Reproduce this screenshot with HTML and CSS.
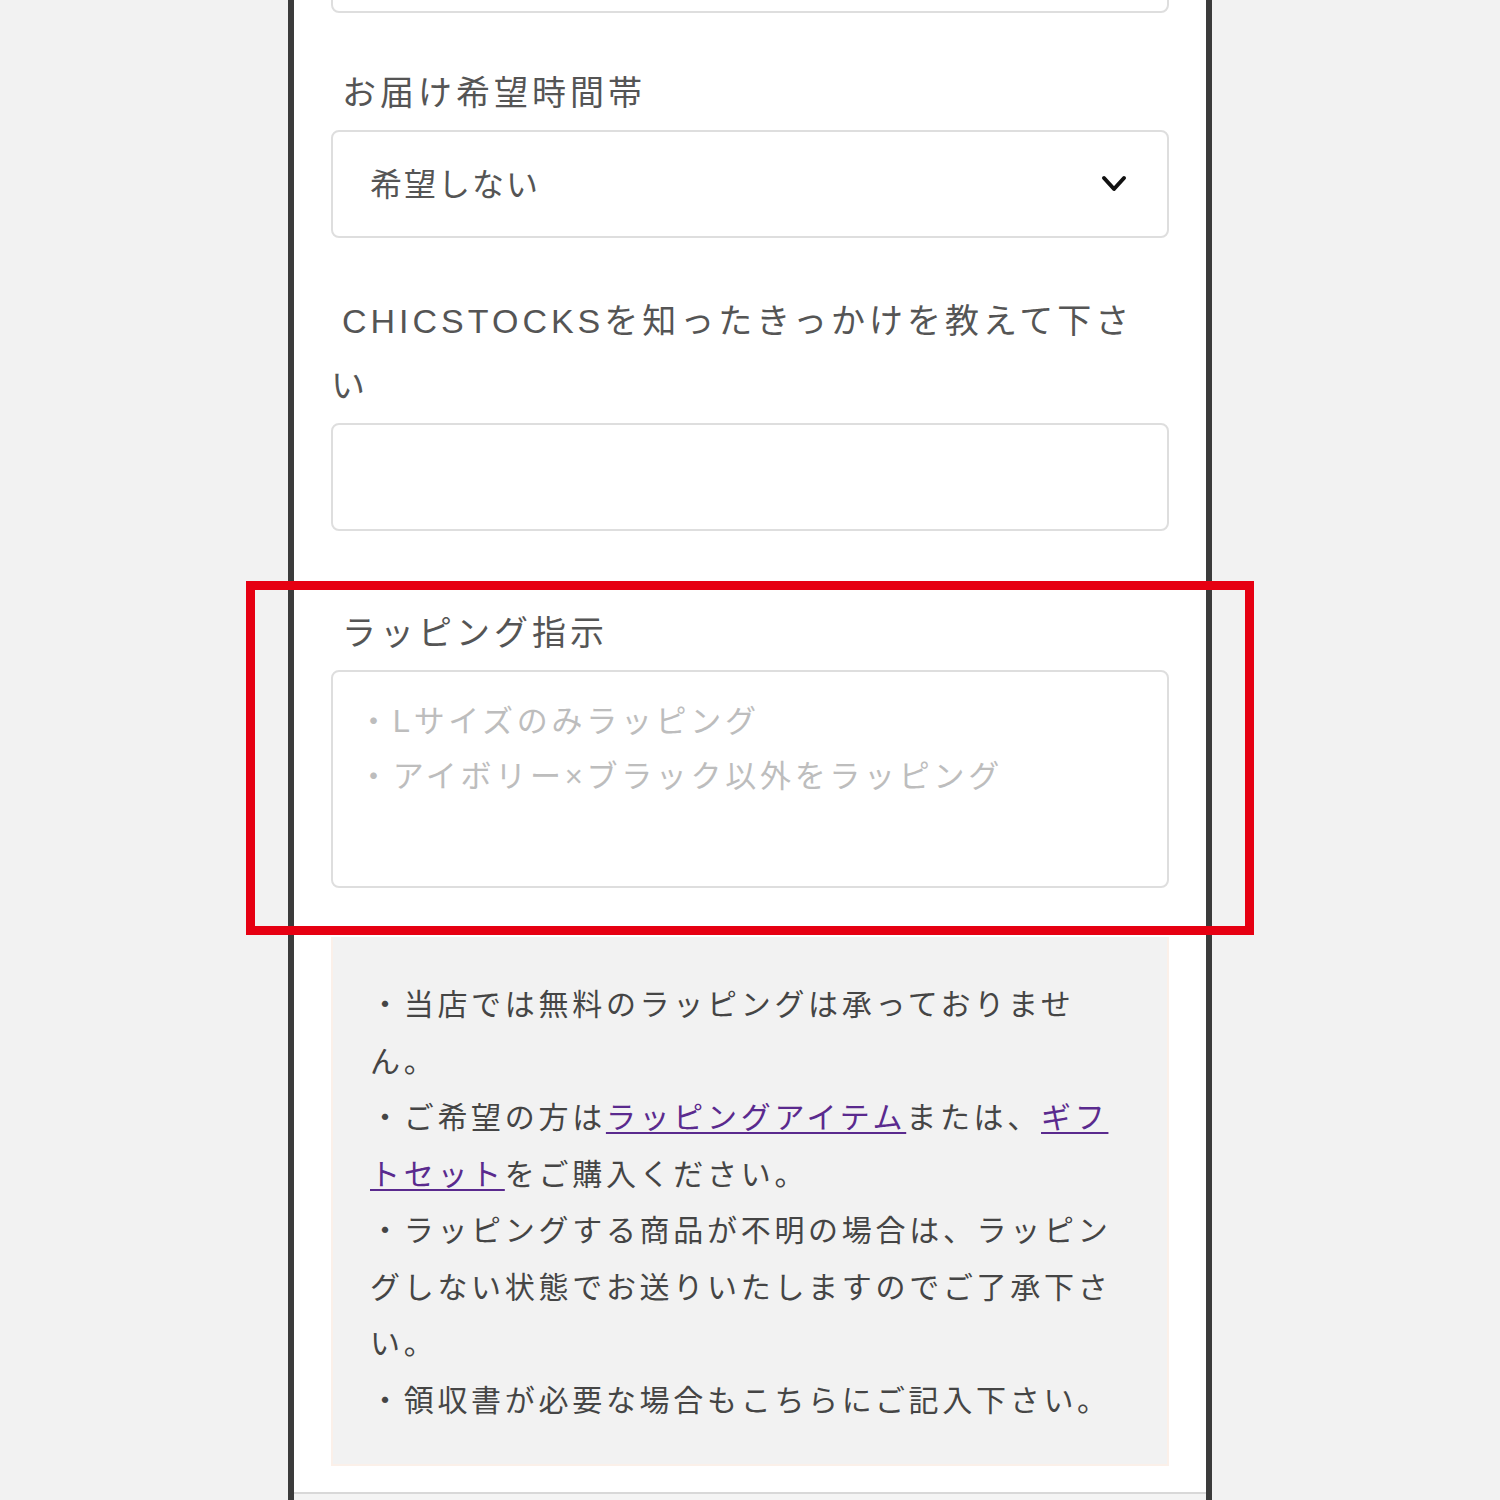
FILE: index.html
```html
<!DOCTYPE html>
<html lang="ja">
<head>
<meta charset="utf-8">
<link rel="stylesheet" href="styles.css">
</head>
<body>
<div class="page">
  <div class="frame">
    <div class="box box-prev"></div>

    <div class="field field-time">
      <div class="label">お届け希望時間帯</div>
      <div class="box select">
        <span class="select-text">希望しない</span>
        <svg class="chev" width="26" height="18" viewBox="0 0 26 18"><polyline points="3,3 13,14 23,3" fill="none" stroke="#111" stroke-width="4" stroke-linecap="round" stroke-linejoin="round"/></svg>
      </div>
    </div>

    <div class="field field-how">
      <div class="label">CHICSTOCKSを知ったきっかけを教えて下さい</div>
      <div class="box"></div>
    </div>

    <div class="field field-wrap">
      <div class="label">ラッピング指示</div>
      <div class="box textarea">
        <div class="ph">・Lサイズのみラッピング</div>
        <div class="ph">・アイボリー×ブラック以外をラッピング</div>
      </div>
    </div>

    <div class="note">
      <p>・当店では無料のラッピングは承っておりません。</p>
      <p>・ご希望の方は<a href="#">ラッピングアイテム</a>または、<a href="#">ギフトセット</a>をご購入ください。</p>
      <p>・ラッピングする商品が不明の場合は、ラッピングしない状態でお送りいたしますのでご了承下さい。</p>
      <p>・領収書が必要な場合もこちらにご記入下さい。</p>
    </div>

    <div class="footer-line"></div>
  </div>
  <div class="highlight"></div>
</div>
</body>
</html>
```

FILE: styles.css
```css
html, body {
  margin: 0;
  padding: 0;
  background: #f2f2f2;
}
body {
  font-family: "Liberation Sans", "Noto Sans CJK JP", sans-serif;
  color: #444;
}
.page {
  position: relative;
  width: 1500px;
  height: 1500px;
  overflow: hidden;
}
.frame {
  width: 924px;
  margin-left: 288px;
  height: 1500px;
  box-sizing: border-box;
  padding: 0 37px;
  border-left: 6px solid #3b3b3b;
  border-right: 6px solid #3b3b3b;
  background: #fff;
  display: flex;
  flex-direction: column;
  overflow: hidden;
}
.box {
  box-sizing: border-box;
  height: 108px;
  border: 2px solid #dedede;
  border-radius: 8px;
  background: #fff;
  flex-shrink: 0;
}
.box-prev {
  margin-top: -95px;
}
.field {
  display: flex;
  flex-direction: column;
}
.field-time { margin-top: 48px; }
.field-how { margin-top: 51px; }
.field-wrap { margin-top: 70px; }
.label {
  font-size: 34px;
  line-height: 65px;
  letter-spacing: 4px;
  color: #555;
  text-indent: 11px;
  margin-bottom: 4px;
}
.select {
  display: flex;
  align-items: center;
  justify-content: space-between;
  padding: 0 40px 4px 37px;
}
.select-text {
  font-size: 32px;
  letter-spacing: 2px;
  color: #555;
}
.chev { display: block; margin-top: 4px; }
.textarea {
  height: 218px;
  padding: 22px 30px 0 25px;
}
.ph {
  font-size: 31px;
  line-height: 55px;
  letter-spacing: 3.7px;
  color: #bdbdbd;
}
.note {
  margin-top: 49px;
  box-sizing: border-box;
  height: 529px;
  background: #f2f2f2;
  border: 2px solid #fbf0e9;
  border-top: none;
  padding: 40px 40px 0 37px;
  flex-shrink: 0;
}
.note p {
  margin: 0;
  font-size: 30px;
  line-height: 56.5px;
  letter-spacing: 3.7px;
  color: #454545;
  width: 755px;
}
.note a {
  color: #5a2a8e;
  text-decoration: underline;
  text-decoration-thickness: 2px;
  text-underline-offset: 4px;
}
.footer-line {
  margin-top: 26px;
  margin-left: -37px;
  margin-right: -37px;
  height: 100px;
  border-top: 2px solid #d8d8d8;
  background: #f4f4f4;
  flex-shrink: 0;
}
.highlight {
  position: absolute;
  left: 246px;
  top: 581px;
  width: 1008px;
  height: 354px;
  box-sizing: border-box;
  border: 9px solid #e60012;
}
```
